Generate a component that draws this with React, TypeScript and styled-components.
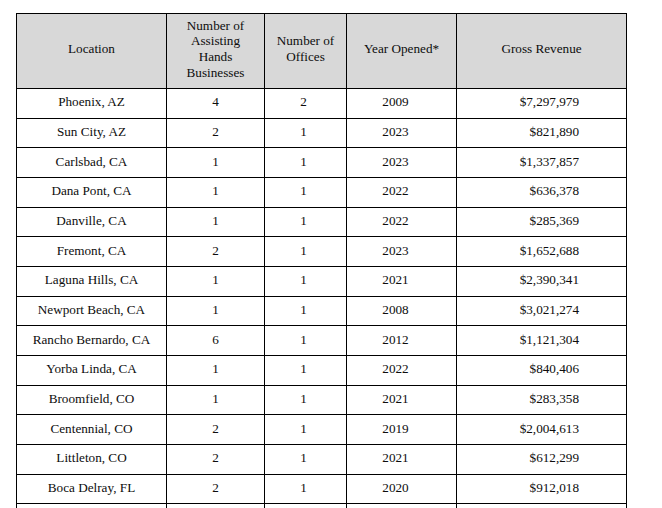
import React from "react";
import styled, { createGlobalStyle } from "styled-components";

const Global = createGlobalStyle`
  html, body { margin: 0; padding: 0; background: #ffffff; overflow: hidden; }
  body, table, th, td { font-family: "Liberation Serif", "Times New Roman", serif; color: #0d0d0d; }
`;

const Page = styled.div`
  padding: 13px 0 0 16px;
  width: 662px;
  height: 508px;
  box-sizing: border-box;
  overflow: hidden;
`;

const Table = styled.table`
  border-collapse: collapse;
  table-layout: fixed;
  width: 610px;
  font-family: "Liberation Serif", "Times New Roman", serif;
  font-size: 13.2px;
`;

const HeadCell = styled.th<{ $w: number }>`
  width: ${(p) => p.$w}px;
  height: 75px;
  padding: 0 6px 4px;
  box-sizing: border-box;
  background: #d8d8d8;
  border: 1px solid #000;
  font-family: "Liberation Serif", "Times New Roman", serif;
  font-size: 13.2px;
  font-weight: normal;
  line-height: 15.6px;
  text-align: center;
  vertical-align: middle;
`;

const Row = styled.tr`
  height: 29.67px;
`;

const Cell = styled.td<{ $align?: "center" | "right"; $pr?: number }>`
  border: 1px solid #000;
  padding: 0 ${(p) => p.$pr ?? 0}px 3px 0;
  font-family: "Liberation Serif", "Times New Roman", serif;
  font-size: 13.2px;
  text-align: ${(p) => p.$align ?? "center"};
  vertical-align: middle;
  line-height: 15px;
  white-space: nowrap;
`;

const columns = [
  { w: 150, label: "Location" },
  { w: 98, label: "Number of Assisting Hands Businesses" },
  { w: 82, label: "Number of Offices" },
  { w: 110, label: "Year Opened*" },
  { w: 170, label: "Gross Revenue" },
];

const rows: [string, string, string, string, string][] = [
  ["Phoenix, AZ", "4", "2", "2009", "$7,297,979"],
  ["Sun City, AZ", "2", "1", "2023", "$821,890"],
  ["Carlsbad, CA", "1", "1", "2023", "$1,337,857"],
  ["Dana Pont, CA", "1", "1", "2022", "$636,378"],
  ["Danville, CA", "1", "1", "2022", "$285,369"],
  ["Fremont, CA", "2", "1", "2023", "$1,652,688"],
  ["Laguna Hills, CA", "1", "1", "2021", "$2,390,341"],
  ["Newport Beach, CA", "1", "1", "2008", "$3,021,274"],
  ["Rancho Bernardo, CA", "6", "1", "2012", "$1,121,304"],
  ["Yorba Linda, CA", "1", "1", "2022", "$840,406"],
  ["Broomfield, CO", "1", "1", "2021", "$283,358"],
  ["Centennial, CO", "2", "1", "2019", "$2,004,613"],
  ["Littleton, CO", "2", "1", "2021", "$612,299"],
  ["Boca Delray, FL", "2", "1", "2020", "$912,018"],
  ["", "", "", "", ""],
];

export default function App() {
  return (
    <>
      <Global />
      <Page>
        <Table>
          <thead>
            <tr>
              {columns.map((c) => (
                <HeadCell key={c.label} $w={c.w}>
                  {c.label}
                </HeadCell>
              ))}
            </tr>
          </thead>
          <tbody>
            {rows.map((r, i) => (
              <Row key={i}>
                <Cell>{r[0]}</Cell>
                <Cell>{r[1]}</Cell>
                <Cell $pr={4}>{r[2]}</Cell>
                <Cell $pr={12}>{r[3]}</Cell>
                <Cell $align="right" $pr={47}>
                  {r[4]}
                </Cell>
              </Row>
            ))}
          </tbody>
        </Table>
      </Page>
    </>
  );
}
